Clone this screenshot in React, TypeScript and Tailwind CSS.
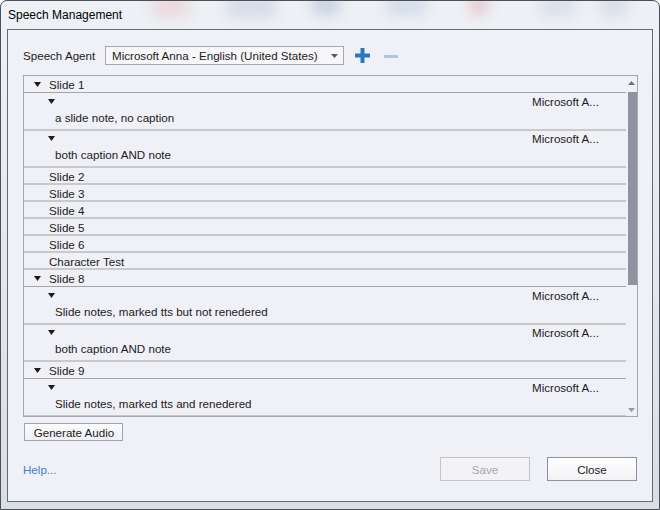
import React from 'react';

type Row =
   | { kind: 'slide'; label: string; open?: boolean }
   | { kind: 'note'; text: string };

const rows: Row[] = [
   { kind: 'slide', label: 'Slide 1', open: true },
   { kind: 'note', text: 'a slide note, no caption' },
   { kind: 'note', text: 'both caption AND note' },
   { kind: 'slide', label: 'Slide 2' },
   { kind: 'slide', label: 'Slide 3' },
   { kind: 'slide', label: 'Slide 4' },
   { kind: 'slide', label: 'Slide 5' },
   { kind: 'slide', label: 'Slide 6' },
   { kind: 'slide', label: 'Character Test' },
   { kind: 'slide', label: 'Slide 8', open: true },
   { kind: 'note', text: 'Slide notes, marked tts but not renedered' },
   { kind: 'note', text: 'both caption AND note' },
   { kind: 'slide', label: 'Slide 9', open: true },
   { kind: 'note', text: 'Slide notes, marked tts and renedered' },
];

function Tri() {
   return (
      <svg width="7" height="5" viewBox="0 0 7 5" className="block">
         <path d="M0 0h7L3.5 5z" fill="#1c1c1c" />
      </svg>
   );
}

function SlideRow({ label, open }: { label: string; open?: boolean }) {
   return (
      <div>
         <div className="flex h-[15px] items-center pt-[2px]">
            <div className="flex w-[25px] justify-center pl-[1px]">{open && <Tri />}</div>
            <span>{label}</span>
         </div>
         {open ? (
            <div className="h-[3px] pt-[1px]">
               <div className="h-px bg-[#a4a4a4]" />
            </div>
         ) : (
            <div className="h-[2px] bg-[#c9c9c9]" />
         )}
      </div>
   );
}

function NoteRow({ text }: { text: string }) {
   return (
      <div>
         <div className="relative h-[35px]">
            <div className="absolute left-[24px] top-[5px]">
               <Tri />
            </div>
            <span className="absolute right-[27px] top-0">Microsoft A...</span>
            <span className="absolute left-[31px] top-[16px]">{text}</span>
         </div>
         <div className="h-[2px] bg-[#c9c9c9]" />
      </div>
   );
}

export default function App() {
   return (
      <div className="relative flex h-[510px] w-[660px] flex-col overflow-hidden rounded-t-[7px] border border-[#4b5058] bg-gradient-to-b from-[#eef1f5] via-[#e4e8ee] to-[#d9dee5] font-['Liberation_Sans',sans-serif] text-[11.6px] leading-[15px] text-[#1b1b1b]">
         {/* blurred glass behind the frame */}
         <div className="absolute left-[150px] top-[-6px] h-[22px] w-[40px] rounded-full bg-[#e8b4b8] opacity-40 blur-[7px]" />
         <div className="absolute left-[225px] top-[-4px] h-[20px] w-[50px] rounded-[6px] bg-[#b9c6dc] opacity-50 blur-[7px]" />
         <div className="absolute left-[310px] top-[-6px] h-[20px] w-[30px] rounded-full bg-[#9fb0cf] opacity-50 blur-[7px]" />
         <div className="absolute left-[385px] top-[-4px] h-[18px] w-[40px] rounded-[4px] bg-[#b8c8e0] opacity-50 blur-[7px]" />
         <div className="absolute left-[468px] top-[-6px] h-[20px] w-[20px] rounded-full bg-[#e09aa0] opacity-50 blur-[7px]" />
         <div className="absolute left-[540px] top-[-4px] h-[18px] w-[34px] rounded-[4px] bg-[#c1cbdb] opacity-50 blur-[7px]" />
         <div className="absolute left-[598px] top-[-8px] h-[24px] w-[30px] rounded-full bg-[#c3ccdc] opacity-50 blur-[7px]" />
         <div className="relative flex h-[28px] items-center pl-[7px] pt-[1px] text-[12px] text-black">Speech Management</div>
         <div className="relative mx-[6px] mb-[7px] flex flex-1 flex-col border border-[#656a73] bg-[#f0f0f7] pl-[15px] pr-[14px] pt-[16px]">
            <div className="flex h-[19px] items-center">
               <span className="w-[82px]">Speech Agent</span>
               <div className="flex h-[19px] w-[239px] items-center justify-between border border-[#a3a7b6] bg-[#f7f7fa] pl-[6px] pr-[5px]">
                  <span>Microsoft Anna - English (United States)</span>
                  <svg width="7" height="4" viewBox="0 0 7 4">
                     <path d="M0 0h7L3.5 4z" fill="#555a63" />
                  </svg>
               </div>
               <svg width="15" height="15" viewBox="0 0 15 15" className="ml-[11px]">
                  <path d="M5.5 0h4v5.5H15v4H9.5V15h-4V9.5H0v-4h5.5z" fill="#2877c4" />
               </svg>
               <div className="ml-[14px] mt-[2px] h-[3px] w-[14px] bg-[#a9c7e5]" />
            </div>
            <div className="mt-[10px] flex h-[342px] border border-[#a2a6b8] bg-[#f0f0f7]">
               <div className="flex-1 overflow-hidden">
                  {rows.map((r, i) =>
                     r.kind === 'slide' ? <SlideRow key={i} label={r.label} open={r.open} /> : <NoteRow key={i} text={r.text} />
                  )}
               </div>
               <div className="flex w-[11px] flex-col items-center pt-[5px]">
                  <svg width="7" height="4" viewBox="0 0 7 4">
                     <path d="M3.5 0L7 4H0z" fill="#6d7282" />
                  </svg>
                  <div className="ml-[1px] mt-[7px] h-[193px] w-[9px] bg-[#8f939f]" />
                  <div className="flex-1" />
                  <svg width="7" height="4" viewBox="0 0 7 4" className="mb-[4px]">
                     <path d="M0 0h7L3.5 4z" fill="#9599a6" />
                  </svg>
               </div>
            </div>
            <button className="ml-[1px] mt-[6px] h-[18px] w-[99px] border border-[#9ea2b4] bg-gradient-to-b from-[#fcfcfd] to-[#f0f0f5] pl-[1px] text-[11.6px] leading-[15px] text-[#1b1b1b]">
               Generate Audio
            </button>
            <div className="mt-[16px] flex items-center pr-[1px]">
               <span className="pt-[1px] text-[#3d82c7]">Help...</span>
               <div className="flex-1" />
               <button className="h-[24px] w-[90px] border border-[#c4c4c8] bg-[#f3f3f6] text-[#a6a6aa]">Save</button>
               <button className="ml-[17px] h-[24px] w-[90px] border border-[#8c90a6] bg-gradient-to-b from-[#ffffff] to-[#f2f2f6] text-[#1b1b1b]">
                  Close
               </button>
            </div>
         </div>
      </div>
   );
}
